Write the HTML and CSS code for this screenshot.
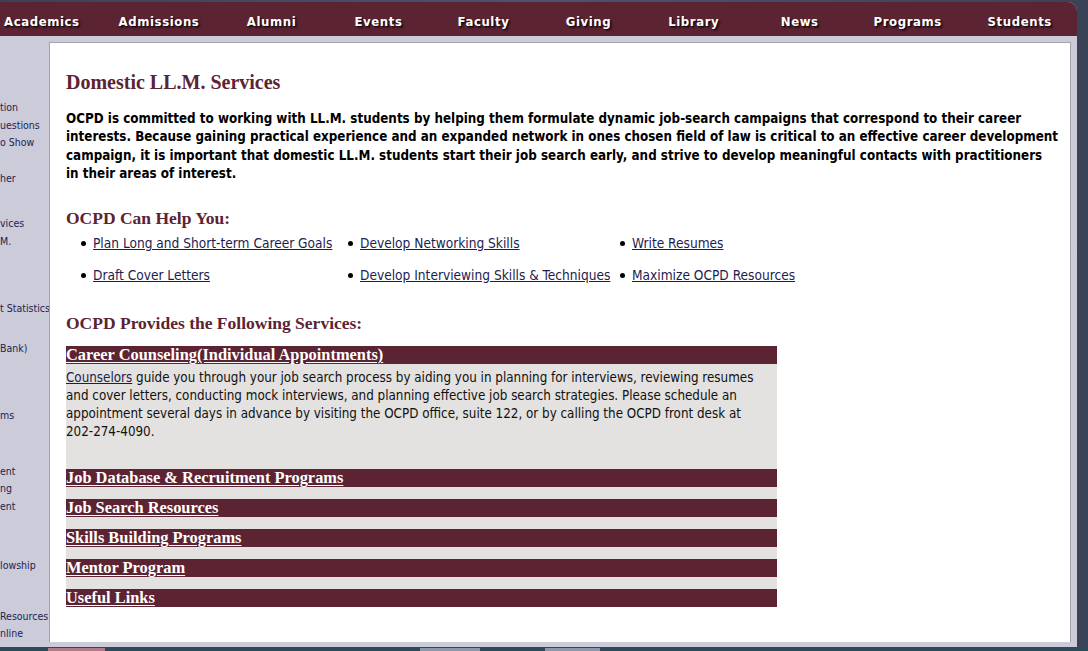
FILE: index.html
```html
<!DOCTYPE html>
<html>
<head>
<meta charset="utf-8">
<title>Domestic LL.M. Services</title>
<link rel="stylesheet" href="styles.css">
</head>
<body>
<div class="window">
  <nav class="nav">
    <a class="nav-item first" href="#">Academics</a>
    <a class="nav-item" href="#">Admissions</a>
    <a class="nav-item" href="#">Alumni</a>
    <a class="nav-item" href="#">Events</a>
    <a class="nav-item" href="#">Faculty</a>
    <a class="nav-item" href="#">Giving</a>
    <a class="nav-item" href="#">Library</a>
    <a class="nav-item" href="#">News</a>
    <a class="nav-item" href="#">Programs</a>
    <a class="nav-item" href="#">Students</a>
  </nav>
  <div class="below">
    <aside class="sidebar">
      <div class="sb">tion</div>
      <div class="sb">uestions</div>
      <div class="sb">o Show</div>
      <div class="sb gap-a">her</div>
      <div class="sb gap-b">vices</div>
      <div class="sb">M.</div>
      <div class="sb gap-c">t Statistics</div>
      <div class="sb gap-d">Bank)</div>
      <div class="sb gap-e">ms</div>
      <div class="sb gap-f">ent</div>
      <div class="sb">ng</div>
      <div class="sb">ent</div>
      <div class="sb gap-g">lowship</div>
      <div class="sb gap-h">Resources</div>
      <div class="sb">nline</div>
    </aside>
    <main class="content">
      <h1 class="title">Domestic LL.M. Services</h1>
      <p class="intro">OCPD is committed to working with LL.M. students by helping them formulate dynamic job-search campaigns that correspond to their career interests. Because gaining practical experience and an expanded network in ones chosen field of law is critical to an effective career development campaign, it is important that domestic LL.M. students start their job search early, and strive to develop meaningful contacts with practitioners<br>in their areas of interest.</p>
      <h2 class="sub help">OCPD Can Help You:</h2>
      <ul class="help-list">
        <li><a href="#">Plan Long and Short-term Career Goals</a></li>
        <li><a href="#">Develop Networking Skills</a></li>
        <li><a href="#">Write Resumes</a></li>
        <li><a href="#">Draft Cover Letters</a></li>
        <li><a href="#">Develop Interviewing Skills &amp; Techniques</a></li>
        <li><a href="#">Maximize OCPD Resources</a></li>
      </ul>
      <h2 class="sub provides">OCPD Provides the Following Services:</h2>
      <div class="services">
        <div class="svc-head"><a href="#">Career Counseling(Individual Appointments)</a></div>
        <div class="svc-body"><a href="#">Counselors</a> guide you through your job search process by aiding you in planning for interviews, reviewing resumes and cover letters, conducting mock interviews, and planning effective job search strategies. Please schedule an appointment several days in advance by visiting the OCPD office, suite 122, or by calling the OCPD front desk at <span class="phone">202-274-4090.</span></div>
        <div class="svc-head"><a href="#">Job Database &amp; Recruitment Programs</a></div>
        <div class="svc-gap"></div>
        <div class="svc-head"><a href="#">Job Search Resources</a></div>
        <div class="svc-gap"></div>
        <div class="svc-head"><a href="#">Skills Building Programs</a></div>
        <div class="svc-gap"></div>
        <div class="svc-head"><a href="#">Mentor Program</a></div>
        <div class="svc-gap"></div>
        <div class="svc-head"><a href="#">Useful Links</a></div>
      </div>
    </main>
  </div>
</div>
<div class="taskbar">
  <span class="tb-btn tb-active"></span>
  <span class="tb-btn tb-two"></span>
  <span class="tb-btn tb-three"></span>
</div>
</body>
</html>
```
FILE: styles.css
```css
html, body {
  margin: 0;
  padding: 0;
}
body {
  width: 1088px;
  height: 651px;
  overflow: hidden;
  background: linear-gradient(90deg, #3a4258 0%, #4a5470 50%, #3a4258 100%);
  background-color: #3e4760;
  display: flex;
  flex-direction: column;
  font-family: "DejaVu Sans Condensed", "DejaVu Sans", sans-serif;
}
.window {
  width: 1077px;
  height: 645px;
  margin-top: 2px;
  background: #cccbd9;
  border-top-right-radius: 9px;
  overflow: hidden;
  display: flex;
  flex-direction: column;
}
.nav {
  height: 34px;
  box-sizing: border-box;
  padding-top: 5px;
  flex: none;
  background: #5c2333;
  display: grid;
  grid-template-columns: 101px 116px 109px 105px 105px 105px 105.5px 106.5px 109.5px 1fr;
  align-items: center;
}
.nav-item {
  color: #ffffff;
  text-decoration: none;
  font-weight: bold;
  font-size: 13px;
  letter-spacing: 0.6px;
  text-align: center;
  text-shadow: 1px 1px 1px #1a0a10, 2px 2px 2px rgba(0,0,0,0.5);
}
.nav-item.first {
  text-align: left;
  padding-left: 4px;
}
.below {
  flex: 1;
  display: flex;
  padding-top: 6px;
  padding-right: 6px;
  min-height: 0;
}
.sidebar {
  width: 49px;
  flex: none;
  overflow: hidden;
  white-space: nowrap;
  padding-top: 57px;
  font-size: 10.5px;
  line-height: 17.5px;
  color: #23234f;
}
.sb { margin-top: 0; }
.gap-a { margin-top: 18px; }
.gap-b { margin-top: 28px; }
.gap-c { margin-top: 50px; }
.gap-d { margin-top: 22px; }
.gap-e { margin-top: 50px; }
.gap-f { margin-top: 38px; }
.gap-g { margin-top: 42px; }
.gap-h { margin-top: 33px; }
.content {
  flex: 1;
  background: #ffffff;
  border: 1px solid #a3a2ad;
  border-bottom: none;
  margin-bottom: 5px;
  padding: 0 8px 0 16px;
  min-width: 0;
  color: #000;
}
.title {
  font-family: "Liberation Serif", "Times New Roman", serif;
  font-weight: bold;
  font-size: 20px;
  line-height: 23px;
  color: #5c2333;
  margin: 28px 0 0;
}
.intro {
  font-weight: bold;
  font-size: 13.3px;
  line-height: 18.3px;
  margin: 16px 0 0;
  color: #000;
}
.sub {
  font-family: "Liberation Serif", "Times New Roman", serif;
  font-weight: bold;
  font-size: 17.5px;
  line-height: 21px;
  color: #5c2333;
  margin: 0;
}
.help { margin-top: 25px; }
.provides { margin-top: 29px; }
.help-list {
  list-style: none;
  margin: 5px 0 0;
  padding: 0 0 0 27px;
  display: grid;
  grid-template-columns: 267px 272px auto;
  row-gap: 14px;
  font-size: 13.6px;
  line-height: 18px;
}
.help-list li {
  position: relative;
}
.help-list li::before {
  content: "";
  position: absolute;
  left: -12px;
  top: 7px;
  width: 5px;
  height: 5px;
  border-radius: 50%;
  background: #000;
}
.help-list a, .svc-body a {
  color: #1d1d4f;
  text-decoration: underline;
}
.services {
  width: 711px;
  margin-top: 12px;
}
.svc-head {
  height: 18px;
  background: #5c2333;
  font-family: "Liberation Serif", "Times New Roman", serif;
  font-weight: bold;
  font-size: 16.4px;
  line-height: 18px;
  white-space: nowrap;
}
.svc-head a {
  color: #ffffff;
  text-decoration: underline;
  text-underline-offset: 2px;
}
.svc-body {
  background: #e4e2e0;
  font-size: 13.3px;
  line-height: 18px;
  color: #111;
  padding: 5px 0 28px;
}
.phone {
  white-space: nowrap;
}
.svc-gap {
  height: 12px;
  background: #e4e2e0;
}
.taskbar {
  flex: 1;
  position: relative;
  background: #2c4a58;
}
.tb-btn {
  position: absolute;
  top: 1px;
  height: 4px;
  background: #8a9aa8;
}
.tb-active { left: 48px; width: 57px; background: #b07a88; }
.tb-two { left: 420px; width: 60px; }
.tb-three { left: 545px; width: 55px; }
```
